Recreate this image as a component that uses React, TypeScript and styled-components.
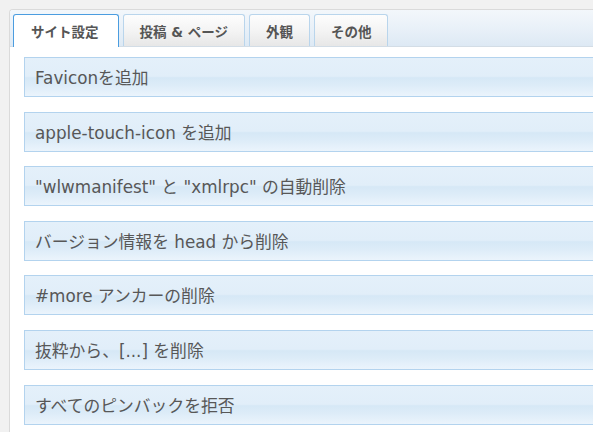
import React from "react";
import styled, { createGlobalStyle, css } from "styled-components";

const GlobalStyle = createGlobalStyle`
  html, body {
    margin: 0;
    padding: 0;
    background: #f1f1f1;
    overflow: hidden;
  }
  body {
    font-family: "DejaVu Sans", "Noto Sans CJK JP", sans-serif;
  }
`;

const Page = styled.div`
  width: 100%;
  height: 432px;
  padding: 9px 0 0 9px;
  box-sizing: border-box;
  overflow: hidden;
`;

const Panel = styled.div`
  width: calc(100% + 40px);
  height: 100%;
  background: #ffffff;
  border: 1px solid #dadada;
  border-right: none;
  border-bottom: none;
  border-radius: 4px 0 0 0;
  box-sizing: border-box;
`;

const TabBar = styled.div`
  display: flex;
  align-items: flex-end;
  gap: 4px;
  padding: 4px 0 0 3px;
  height: 37px;
  box-sizing: border-box;
  background: linear-gradient(to bottom, #f3f7fb 0%, #e8f0f8 55%, #dde9f4 100%);
  border-bottom: 1px solid #d3dde6;
  border-radius: 3px 0 0 0;
`;

const Tab = styled.div<{ $active?: boolean }>`
  height: 32px;
  box-sizing: border-box;
  padding: 0 16px;
  display: flex;
  align-items: center;
  font-family: "DejaVu Sans", "Noto Sans CJK JP", sans-serif;
  font-size: 13.5px;
  font-weight: bold;
  color: #555555;
  white-space: nowrap;
  border: 1px solid #b9d5ec;
  border-bottom: none;
  border-radius: 3px 3px 0 0;
  background: linear-gradient(to bottom, #fdfdfd 0%, #f4f4f4 50%, #e7e7e7 100%);
  ${(p) =>
    p.$active &&
    css`
      height: 33px;
      margin-bottom: -1px;
      padding: 0 19px 0 17px;
      border-color: #4b9de0;
      background: #ffffff;
    `}
`;

const Content = styled.div`
  padding: 10px 0 0 14px;
`;

const Row = styled.div`
  height: 40px;
  box-sizing: border-box;
  margin-bottom: 14.6px;
  padding-left: 10px;
  display: flex;
  align-items: center;
  border: 1px solid #b3d3ee;
  border-right: none;
  background: linear-gradient(
    to bottom,
    #e4f0fa 0%,
    #e1eef9 48%,
    #d6e8f6 52%,
    #ddecf8 72%,
    #ebf4fc 100%
  );
  font-size: 16.8px;
  color: #575757;
  white-space: nowrap;
`;

const tabs = ["サイト設定", "投稿 & ページ", "外観", "その他"];

const rows = [
  "Faviconを追加",
  "apple-touch-icon を追加",
  "\"wlwmanifest\" と \"xmlrpc\" の自動削除",
  "バージョン情報を head から削除",
  "#more アンカーの削除",
  "抜粋から、[...] を削除",
  "すべてのピンバックを拒否",
];

export default function App() {
  return (
    <>
      <GlobalStyle />
      <Page>
        <Panel>
          <TabBar>
            {tabs.map((t, i) => (
              <Tab key={t} $active={i === 0}>
                {t}
              </Tab>
            ))}
          </TabBar>
          <Content>
            {rows.map((r) => (
              <Row key={r}>{r}</Row>
            ))}
          </Content>
        </Panel>
      </Page>
    </>
  );
}
